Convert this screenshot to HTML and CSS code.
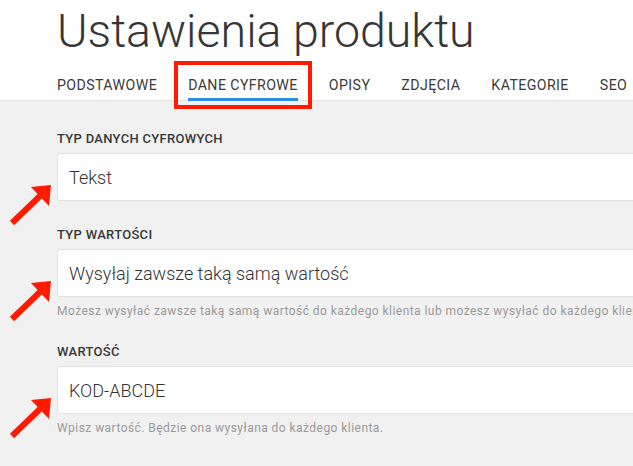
FILE: index.html
```html
<!DOCTYPE html>
<html lang="pl">
<head>
    <meta charset="UTF-8">
    <meta name="viewport" content="width=device-width, initial-scale=1.0">
    <title>Ustawienia produktu</title>
    <link rel="stylesheet" href="styles.css">
</head>
<body>
    <header class="page-header">
        <h1>Ustawienia produktu</h1>
        <nav class="tabs">
            <a class="tab">Podstawowe</a>
            <a class="tab active">Dane cyfrowe<span class="highlight"></span></a>
            <a class="tab">Opisy</a>
            <a class="tab">Zdjęcia</a>
            <a class="tab">Kategorie</a>
            <a class="tab">SEO</a>
        </nav>
    </header>

    <main class="settings">
        <div class="field">
            <label class="field-label">Typ danych cyfrowych</label>
            <div class="field-row">
                <svg class="arrow" width="56" height="48" viewBox="0 0 56 48">
                    <line x1="12" y1="42" x2="40" y2="15" stroke="#ff1a00" stroke-width="6"/>
                    <polygon points="51,4 31,6 49,25" fill="#ff1a00"/>
                </svg>
                <input class="field-input" type="text" value="Tekst" readonly>
            </div>
        </div>

        <div class="field">
            <label class="field-label">Typ wartości</label>
            <div class="field-row">
                <svg class="arrow" width="56" height="48" viewBox="0 0 56 48">
                    <line x1="12" y1="42" x2="40" y2="15" stroke="#ff1a00" stroke-width="6"/>
                    <polygon points="51,4 31,6 49,25" fill="#ff1a00"/>
                </svg>
                <input class="field-input" type="text" value="Wysyłaj zawsze taką samą wartość" readonly>
            </div>
            <p class="field-help">Możesz wysyłać zawsze taką samą wartość do każdego klienta lub możesz wysyłać do każdego klienta inną wartość z listy.</p>
        </div>

        <div class="field">
            <label class="field-label">Wartość</label>
            <div class="field-row">
                <svg class="arrow" width="56" height="48" viewBox="0 0 56 48">
                    <line x1="12" y1="42" x2="40" y2="15" stroke="#ff1a00" stroke-width="6"/>
                    <polygon points="51,4 31,6 49,25" fill="#ff1a00"/>
                </svg>
                <input class="field-input" type="text" value="KOD-ABCDE" readonly>
            </div>
            <p class="field-help">Wpisz wartość. Będzie ona wysyłana do każdego klienta.</p>
        </div>
    </main>
</body>
</html>
```

FILE: styles.css
```css
:root {
    --text-dark: #333;
    --text-muted: #9a9a9a;
    --page-gray: #f1f1f1;
    --border-light: #e2e2e2;
    --tab-blue: #2b8ce6;
    --mark-red: #ff1a00;
}

html, body {
    height: 100%;
}

body {
    margin: 0;
    font-family: Roboto, "Liberation Sans", sans-serif;
    color: var(--text-dark);
    background-color: var(--page-gray);
    overflow: hidden;
}

.page-header {
    background-color: white;
    padding: 5px 0 0 57px;
    border-bottom: 1px solid var(--border-light);
}

h1 {
    margin: 0;
    font-size: 46.5px;
    font-weight: 300;
    line-height: 52px;
    color: #363636;
    white-space: nowrap;
}

.tabs {
    display: flex;
    gap: 31px;
    margin-top: 20px;
    margin-bottom: -1px;
    white-space: nowrap;
}

.tab {
    position: relative;
    font-size: 14.2px;
    line-height: 16px;
    letter-spacing: 0.4px;
    text-transform: uppercase;
    color: #3a3a3a;
    padding-bottom: 5px;
    border-bottom: 3px solid transparent;
    cursor: pointer;
}

.tab.active {
    border-bottom-color: var(--tab-blue);
}

/* annotation box round the active tab */
.highlight {
    position: absolute;
    left: -14px;
    right: -14px;
    top: -16px;
    bottom: -11px;
    border: 4px solid var(--mark-red);
}

.settings {
    width: 760px;
    padding: 30px 0 0 57px;
}

.field {
    margin-bottom: 26px;
}

.field-label {
    display: block;
    font-size: 13px;
    font-weight: 500;
    line-height: 16px;
    letter-spacing: 0.3px;
    text-transform: uppercase;
    color: #383838;
    margin-bottom: 6px;
}

.field-row {
    position: relative;
}

.arrow {
    position: absolute;
    left: -57px;
    top: 28px;
}

.field-input {
    display: block;
    box-sizing: border-box;
    width: 100%;
    height: 48px;
    margin: 0;
    padding: 0 11px;
    border: 1px solid var(--border-light);
    border-radius: 3px;
    background-color: white;
    font-family: inherit;
    font-size: 18px;
    font-weight: 300;
    color: var(--text-dark);
    outline: none;
}

.field-help {
    margin: 6px 0 0;
    font-size: 12px;
    line-height: 16px;
    color: var(--text-muted);
    white-space: nowrap;
    letter-spacing: 0.45px;
}

.field:has(.field-help) {
    margin-bottom: 25px;
}
```
